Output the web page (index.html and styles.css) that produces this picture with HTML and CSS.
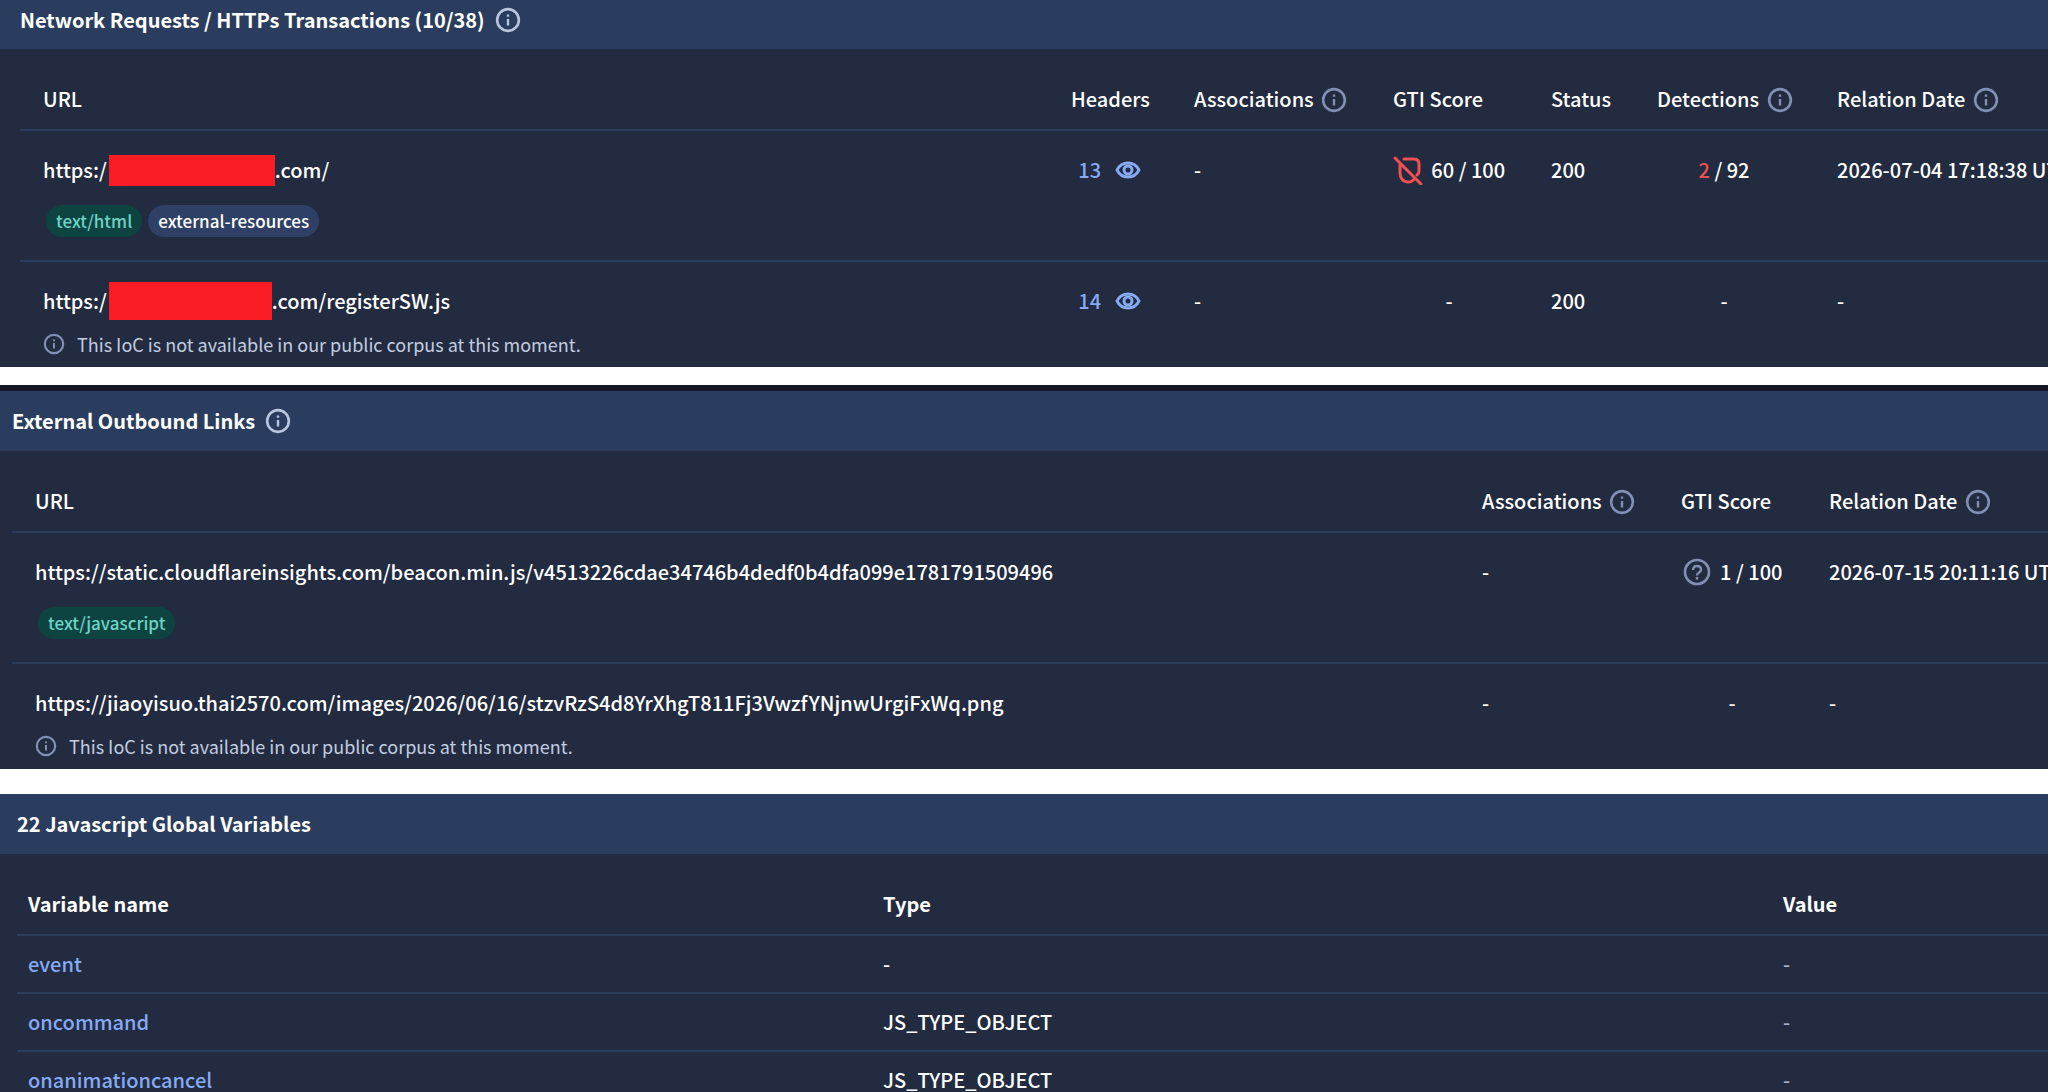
FILE: index.html
```html
<!DOCTYPE html>
<html lang="en">
<head>
    <meta charset="UTF-8">
    <meta name="viewport" content="width=device-width, initial-scale=1.0">
    <title>URL Report</title>
    <link rel="stylesheet" href="styles.css">
</head>
<body>
    <svg class="sprite" aria-hidden="true">
        <symbol id="info" viewBox="0 0 24 24">
            <circle cx="12" cy="12" r="10" fill="none" stroke="currentColor" stroke-width="2.4"/>
            <path d="M12 11v6M12 7v2" fill="none" stroke="currentColor" stroke-width="2.2"/>
        </symbol>
        <symbol id="eye" viewBox="0 0 26 20">
            <path d="M2 10C5 4 9 3 13 3s8 1 11 7c-3 6-7 7-11 7S5 16 2 10z" fill="none" stroke="currentColor" stroke-width="2.8"/>
            <circle cx="13" cy="10" r="4" fill="none" stroke="currentColor" stroke-width="3"/>
        </symbol>
        <symbol id="shield-off" viewBox="0 0 30 30">
            <path d="M11 4h10q5 0 5 5v7q0 2-2 4M7 10v8c0 5 3 9 8 9 3 0 5-1 7-4M2 3l26 26" fill="none" stroke="currentColor" stroke-width="3" stroke-linecap="round"/>
        </symbol>
        <symbol id="question" viewBox="0 0 30 30">
            <circle cx="15" cy="15" r="12" fill="none" stroke="currentColor" stroke-width="2.6"/>
            <path d="M11 13q0-4 4-4t4 3.500q0 2-2 3t-2 3M15 20v2.500" fill="none" stroke="currentColor" stroke-width="2.400"/>
        </symbol>
    </svg>

    <section class="panel requests">
        <h2>Network Requests / HTTPs Transactions (10/38) <svg class="icon"><use href="#info"/></svg></h2>
        <table>
            <thead>
                <tr>
                    <th>URL</th>
                    <th class="col-headers">Headers</th>
                    <th class="col-assoc">Associations <svg class="icon"><use href="#info"/></svg></th>
                    <th class="col-score">GTI Score</th>
                    <th class="col-status">Status</th>
                    <th class="col-detections">Detections <svg class="icon"><use href="#info"/></svg></th>
                    <th class="col-date">Relation Date <svg class="icon"><use href="#info"/></svg></th>
                </tr>
            </thead>
            <tbody>
                <tr>
                    <td>
                        <div class="url">https:/<span class="redacted"></span>.com/</div>
                        <div class="tags"><span class="tag type">text/html</span><span class="tag">external-resources</span></div>
                    </td>
                    <td class="center"><a href="#">13 <svg class="eye"><use href="#eye"/></svg></a></td>
                    <td>-</td>
                    <td class="center"><svg class="badge bad"><use href="#shield-off"/></svg> 60 / 100</td>
                    <td>200</td>
                    <td class="center"><span class="bad">2</span> / 92</td>
                    <td>2026-07-04 17:18:38 UTC</td>
                </tr>
                <tr>
                    <td>
                        <div class="url">https:/<span class="redacted tall"></span>.com/registerSW.js</div>
                        <div class="note"><svg class="icon"><use href="#info"/></svg>This IoC is not available in our public corpus at this moment.</div>
                    </td>
                    <td class="center"><a href="#">14 <svg class="eye"><use href="#eye"/></svg></a></td>
                    <td>-</td>
                    <td class="center">-</td>
                    <td>200</td>
                    <td class="center">-</td>
                    <td>-</td>
                </tr>
            </tbody>
        </table>
    </section>

    <section class="panel links">
        <h2>External Outbound Links <svg class="icon"><use href="#info"/></svg></h2>
        <table>
            <thead>
                <tr>
                    <th>URL</th>
                    <th class="col-assoc">Associations <svg class="icon"><use href="#info"/></svg></th>
                    <th class="col-score">GTI Score</th>
                    <th class="col-date">Relation Date <svg class="icon"><use href="#info"/></svg></th>
                </tr>
            </thead>
            <tbody>
                <tr>
                    <td>
                        <div class="url">https://static.cloudflareinsights.com/beacon.min.js/v4513226cdae34746b4dedf0b4dfa099e1781791509496</div>
                        <div class="tags"><span class="tag type">text/javascript</span></div>
                    </td>
                    <td>-</td>
                    <td class="center"><svg class="badge"><use href="#question"/></svg> 1 / 100</td>
                    <td>2026-07-15 20:11:16 UTC</td>
                </tr>
                <tr>
                    <td>
                        <div class="url">https://jiaoyisuo.thai2570.com/images/2026/06/16/stzvRzS4d8YrXhgT811Fj3VwzfYNjnwUrgiFxWq.png</div>
                        <div class="note"><svg class="icon"><use href="#info"/></svg>This IoC is not available in our public corpus at this moment.</div>
                    </td>
                    <td>-</td>
                    <td class="center">-</td>
                    <td>-</td>
                </tr>
            </tbody>
        </table>
    </section>

    <section class="panel variables">
        <h2>22 Javascript Global Variables</h2>
        <table>
            <thead>
                <tr>
                    <th>Variable name</th>
                    <th class="col-type">Type</th>
                    <th class="col-value">Value</th>
                </tr>
            </thead>
            <tbody>
                <tr>
                    <td><a href="#">event</a></td>
                    <td>-</td>
                    <td class="muted">-</td>
                </tr>
                <tr>
                    <td><a href="#">oncommand</a></td>
                    <td>JS_TYPE_OBJECT</td>
                    <td class="muted">-</td>
                </tr>
                <tr>
                    <td><a href="#">onanimationcancel</a></td>
                    <td>JS_TYPE_OBJECT</td>
                    <td class="muted">-</td>
                </tr>
            </tbody>
        </table>
    </section>
</body>
</html>
```
FILE: styles.css
```css
* {
    box-sizing: border-box;
}
body {
    margin: 0;
    height: 100vh;
    overflow: hidden;
    background: #fff;
    color: #fff;
    font-family: "Noto Sans CJK SC", "Noto Sans", sans-serif;
    font-size: 20px;
    font-weight: 500;
    line-height: 30px;
}
.sprite {
    display: none;
}
.panel {
    background: #222b3f;
    overflow: hidden;
}
h2 {
    display: flex;
    align-items: center;
    gap: 10px;
    margin: 0;
    padding: 14px 20px;
    background: #2b3d5e;
    font-size: 20px;
    font-weight: 700;
    line-height: 32px;
}
table {
    width: 100%;
    table-layout: fixed;
    border-collapse: collapse;
}
th, td {
    padding: 24px 23px 23px;
    text-align: left;
    vertical-align: top;
    white-space: nowrap;
}
th {
    padding: 35px 23px 15px;
    font-weight: 500;
}
tbody tr {
    border-top: 2px solid #2d3d5d;
}
a {
    color: #86aaf5;
    text-decoration: none;
}
.icon {
    width: 26px;
    height: 26px;
    color: #8291b3;
}
h2 .icon {
    color: #b9c6e0;
}
th .icon {
    margin: -2px 0 -2px 3px;
    vertical-align: -4px;
}
.eye {
    width: 26px;
    height: 20px;
    margin-left: 9px;
    vertical-align: -2px;
}
.badge {
    width: 30px;
    height: 30px;
    margin: -4px 4px -4px 0;
    color: #8291b3;
    vertical-align: -3px;
}
.bad {
    color: #f44f52;
}
.center {
    padding-left: 0;
    padding-right: 0;
    text-align: center;
}
.muted {
    color: #a9b2c6;
}

/* table columns */
.col-headers {
    width: 123px;
}
.col-assoc {
    width: 199px;
}
.col-score {
    width: 158px;
}
.col-status {
    width: 106px;
}
.col-detections {
    width: 180px;
}
.col-date {
    width: 234px;
}
.links .col-score {
    width: 148px;
}
.links .col-date {
    width: 242px;
}
.col-type {
    width: 900px;
}
.col-value {
    width: 276px;
}

.url {
    display: flex;
    align-items: center;
    height: 30px;
}
.redacted {
    width: 166px;
    height: 31px;
    margin-left: 2px;
    background: #f91c24;
}
.redacted.tall {
    width: 163px;
    height: 38px;
}
.tags {
    display: flex;
    gap: 6px;
    margin-top: 20px;
    padding-left: 3px;
}
.tag {
    padding: 0 10px;
    border-radius: 16px;
    background: #2f4066;
    font-size: 17px;
    line-height: 32px;
}
.tag.type {
    background: #0d4442;
    color: #6ed3c4;
}
.note {
    display: flex;
    align-items: center;
    gap: 12px;
    margin-top: 13px;
    color: #c3cde0;
    font-size: 18px;
    font-weight: 400;
}
.note .icon {
    width: 22px;
    height: 22px;
}

.requests {
    padding-left: 20px;
}
.requests h2 {
    margin-left: -20px;
    padding-top: 4px;
    padding-bottom: 13px;
}
.requests tr:last-child td, .links tr:last-child td {
    padding-bottom: 8px;
}
.links {
    margin-top: 18px;
    padding-left: 12px;
    border-top: 6px solid #171624;
}
.links h2 {
    margin-left: -12px;
    padding-left: 12px;
}
.variables {
    margin-top: 25px;
    padding-left: 17px;
}
.variables h2 {
    margin-left: -17px;
    padding-left: 17px;
}
.variables th, .variables td {
    padding-left: 11px;
}
.variables th {
    font-weight: 700;
}
.variables td {
    padding-top: 13px;
    padding-bottom: 13px;
}
```
